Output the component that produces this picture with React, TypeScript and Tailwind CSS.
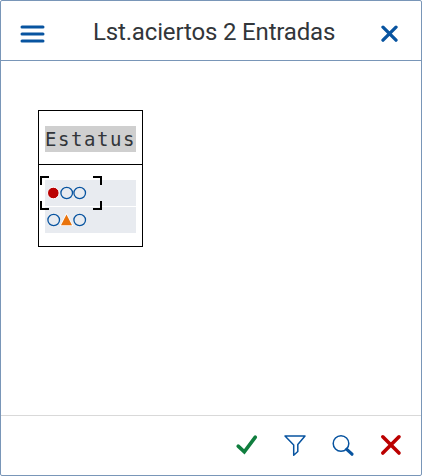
type Light = 'red' | 'yellow' | 'off';

function StatusLight({ kind }: { kind: Light }) {
  return (
    <svg width="13" height="14" viewBox="0 0 13 14" className="shrink-0 overflow-visible">
      {kind === 'off' && (
        <ellipse cx="6.7" cy="7" rx="5.8" ry="5.6" fill="none" stroke="#0854a0" strokeWidth="1.3" />
      )}
      {kind === 'red' && (
        <circle cx="6.3" cy="7" r="5.8" fill="#bb0000" stroke="#fff" strokeWidth="1" />
      )}
      {kind === 'yellow' && (
        <path d="M6.5 1.6 12 12.3H1Z" fill="#e9730c" stroke="#fff" strokeWidth="1.6" paintOrder="stroke" />
      )}
    </svg>
  );
}

function StatusRow({ lights }: { lights: Light[] }) {
  return (
    <div className="flex h-[26px] w-[91px] items-center bg-[#e8ebf0] pl-[2px]">
      {lights.map((kind, i) => (
        <StatusLight key={i} kind={kind} />
      ))}
    </div>
  );
}

function FocusFrame() {
  return (
    <svg className="absolute left-[1px] top-[11px]" width="62" height="34" viewBox="0 0 62 34">
      <path
        d="M1 8V1H8M54 1H61V8M61 26V33H54M8 33H1V26"
        fill="none"
        stroke="#000"
        strokeWidth="2"
        strokeLinecap="square"
        shapeRendering="crispEdges"
      />
    </svg>
  );
}

export default function App() {
  return (
    <div className="flex h-[476px] w-[422px] flex-col overflow-hidden rounded-[2px] border border-[#7996b8] bg-white font-['Roboto','Noto_Sans',sans-serif]">
      <header className="flex h-[60px] shrink-0 items-center border-b border-[#7996b8]">
        <button aria-label="Menú" className="ml-[19px] w-[25px]">
          <svg width="25" height="18" viewBox="0 0 25 18" className="mt-1.5">
            <path d="M2 2h21M2 9h21M2 16h21" stroke="#0854a0" strokeWidth="3" strokeLinecap="round" />
          </svg>
        </button>
        <h1 className="ml-[48px] mt-0.5 w-[269px] whitespace-nowrap text-2xl leading-8 tracking-[-0.16px] text-[#32363a]">
          Lst.aciertos 2 Entradas
        </h1>
        <button aria-label="Cerrar" className="ml-[19px]">
          <svg width="18" height="18" viewBox="0 0 18 18" className="mt-1.5">
            <path d="M2 2.2 15 15.2M15 2.2 2 15.2" stroke="#0854a0" strokeWidth="3.3" strokeLinecap="round" />
          </svg>
        </button>
      </header>

      <main className="flex-1 pl-[37px] pt-[49px]">
        <section className="h-[137px] w-[105px] border border-black">
          <div className="h-[54px] border-b border-black pl-[6px] pt-[15px]">
            <div className="h-[26px] w-[91px] bg-[#cfcfcf] font-['DejaVu_Sans_Mono',monospace] text-[19px] leading-[26px] tracking-[1.56px] text-[#32363a]">
              Estatus
            </div>
          </div>
          <div className="relative flex flex-col gap-px pl-[6px] pt-[15px]">
            <StatusRow lights={['red', 'off', 'off']} />
            <StatusRow lights={['off', 'yellow', 'off']} />
            <FocusFrame />
          </div>
        </section>
      </main>

      <footer className="flex h-[60px] shrink-0 items-center justify-end gap-6 border-t border-[#d9d9d9] pr-[18px]">
        <svg width="24" height="24" viewBox="0 0 24 24">
          <path d="M3.2 12.2 9.3 17.8 20.3 3.2" fill="none" stroke="#107e3e" strokeWidth="3.6" strokeLinecap="round" />
        </svg>
        <svg width="24" height="24" viewBox="0 0 24 24">
          <path
            d="M2 2H22L14.8 10.5V17.5L10.7 21.3V11Z"
            fill="none"
            stroke="#0854a0"
            strokeWidth="1.5"
            strokeLinejoin="round"
          />
        </svg>
        <svg width="24" height="24" viewBox="0 0 24 24" fill="none" stroke="#0854a0">
          <circle cx="10" cy="9.5" r="7.8" strokeWidth="1.5" />
          <path d="M15.8 15.3 21 20.2" strokeWidth="3.2" strokeLinecap="round" />
        </svg>
        <svg width="24" height="24" viewBox="0 0 24 24">
          <path d="M3.8 2.8 20 19M20 2.8 3.8 19" stroke="#bb0000" strokeWidth="3.6" strokeLinecap="round" />
        </svg>
      </footer>
    </div>
  );
}
